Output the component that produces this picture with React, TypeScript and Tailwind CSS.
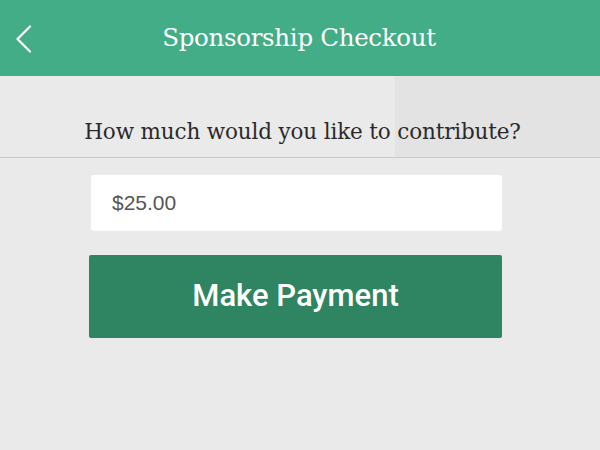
export default function App() {
  return (
    <div className="h-[450px] w-[600px] overflow-hidden bg-[#eaeaea]">
      <header className="relative flex h-[76px] items-center justify-center bg-[#42ad87]">
        <button className="absolute left-[15px] top-[25px] flex h-[28px] w-[18px] items-center">
          <svg width="18" height="28" viewBox="0 0 18 28" fill="none">
            <path d="M15 1.5 L2.5 14 L15 26.5" stroke="white" strokeWidth="2.2" strokeLinecap="round" strokeLinejoin="round" />
          </svg>
        </button>
        <h1 className="mr-[2px] font-['DejaVu_Serif',serif] text-[24.5px] tracking-[-0.3px] text-white">Sponsorship Checkout</h1>
      </header>

      <section className="relative flex h-[82px] items-end justify-center border-b border-[#c9c9c9] pb-[9px]">
        <div className="absolute right-0 top-0 h-full w-[205px] bg-[#e3e3e3]" />
        <p className="relative ml-[5px] font-['DejaVu_Serif',serif] text-[21.5px] tracking-[-0.15px] text-[#2a2a2a]">
          How much would you like to contribute?
        </p>
      </section>

      <div className="flex flex-col items-start pl-[89px] pt-[17px]">
        <div className="ml-[2px] flex h-[56px] w-[411px] items-center rounded-[3px] bg-white px-[21px]">
          <span className="font-['Liberation_Sans',sans-serif] text-[21px] text-[#555555]">$25.00</span>
        </div>
        <button className="mt-[24px] flex h-[83px] w-[413px] items-center justify-center rounded-[2px] bg-[#2f8462] pb-[1px] font-['Roboto',sans-serif] text-[31px] font-medium text-white">
          Make Payment
        </button>
      </div>
    </div>
  );
}
